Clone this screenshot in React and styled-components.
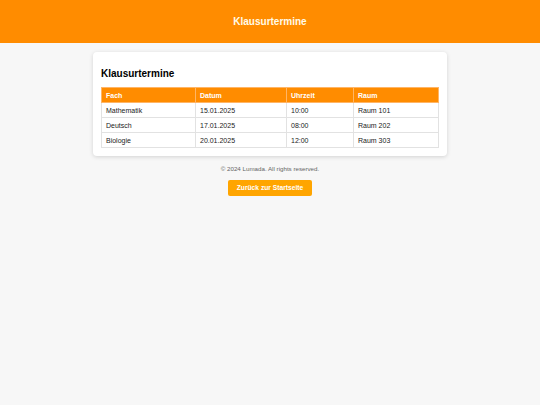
import React from 'react'
import styled, { createGlobalStyle } from 'styled-components'

const GlobalStyle = createGlobalStyle`
    body {
        margin: 0;
        background: #f7f7f7;
        font-family: "Liberation Sans", Arial, sans-serif;
        color: #333;
    }
`

const Header = styled.header`
    background: #ff8c00;
    height: 43px;
    display: flex;
    align-items: center;
    justify-content: center;
    h1 {
        margin: 0;
        color: #fffbe8;
        font-size: 10px;
        font-weight: bold;
    }
`

const Card = styled.main`
    width: 338px;
    margin: 9px auto 0;
    background: #fff;
    padding: 8px;
    border-radius: 4px;
    box-shadow: 0 1px 4px rgba(0, 0, 0, 0.15);
    h2 {
        margin: 8px 0 8px;
        font-size: 10px;
        color: #000;
    }
`

const Table = styled.table`
    width: 100%;
    border-collapse: collapse;
    font-size: 7px;
    th, td {
        border: 1px solid #e2e2e2;
        text-align: left;
        padding: 0 4px;
        height: 14px;
    }
    th {
        background: #ff8c00;
        color: #fff;
        font-weight: bold;
        border-color: #ffb566;
    }
    td {
        color: #222;
    }
`

const Col = styled.col`
    width: ${p => p.$w ? `${p.$w}px` : 'auto'};
`

const Footer = styled.footer`
    text-align: center;
    font-size: 6.2px;
    color: #666;
    margin-top: 9px;
    p {
        margin: 0 0 8px;
    }
`

const BackButton = styled.a`
    display: inline-block;
    background: #ffa500;
    color: #fff;
    font-weight: bold;
    font-size: 6.7px;
    text-decoration: none;
    padding: 0 9px;
    line-height: 16px;
    border-radius: 2px;
`

const exams = [
    { fach: 'Mathematik', datum: '15.01.2025', zeit: '10:00', raum: 'Raum 101' },
    { fach: 'Deutsch', datum: '17.01.2025', zeit: '08:00', raum: 'Raum 202' },
    { fach: 'Biologie', datum: '20.01.2025', zeit: '12:00', raum: 'Raum 303' },
]

export default function App() {
    return (
        <>
            <GlobalStyle />
            <Header>
                <h1>Klausurtermine</h1>
            </Header>
            <Card>
                <h2>Klausurtermine</h2>
                <Table>
                    <colgroup>
                        <Col $w={94} />
                        <Col $w={91} />
                        <Col $w={67} />
                        <Col />
                    </colgroup>
                    <thead>
                        <tr>
                            <th>Fach</th>
                            <th>Datum</th>
                            <th>Uhrzeit</th>
                            <th>Raum</th>
                        </tr>
                    </thead>
                    <tbody>
                        {exams.map(e => (
                            <tr key={e.fach}>
                                <td>{e.fach}</td>
                                <td>{e.datum}</td>
                                <td>{e.zeit}</td>
                                <td>{e.raum}</td>
                            </tr>
                        ))}
                    </tbody>
                </Table>
            </Card>
            <Footer>
                <p>© 2024 Lumada. All rights reserved.</p>
                <BackButton href="#">Zurück zur Startseite</BackButton>
            </Footer>
        </>
    )
}
